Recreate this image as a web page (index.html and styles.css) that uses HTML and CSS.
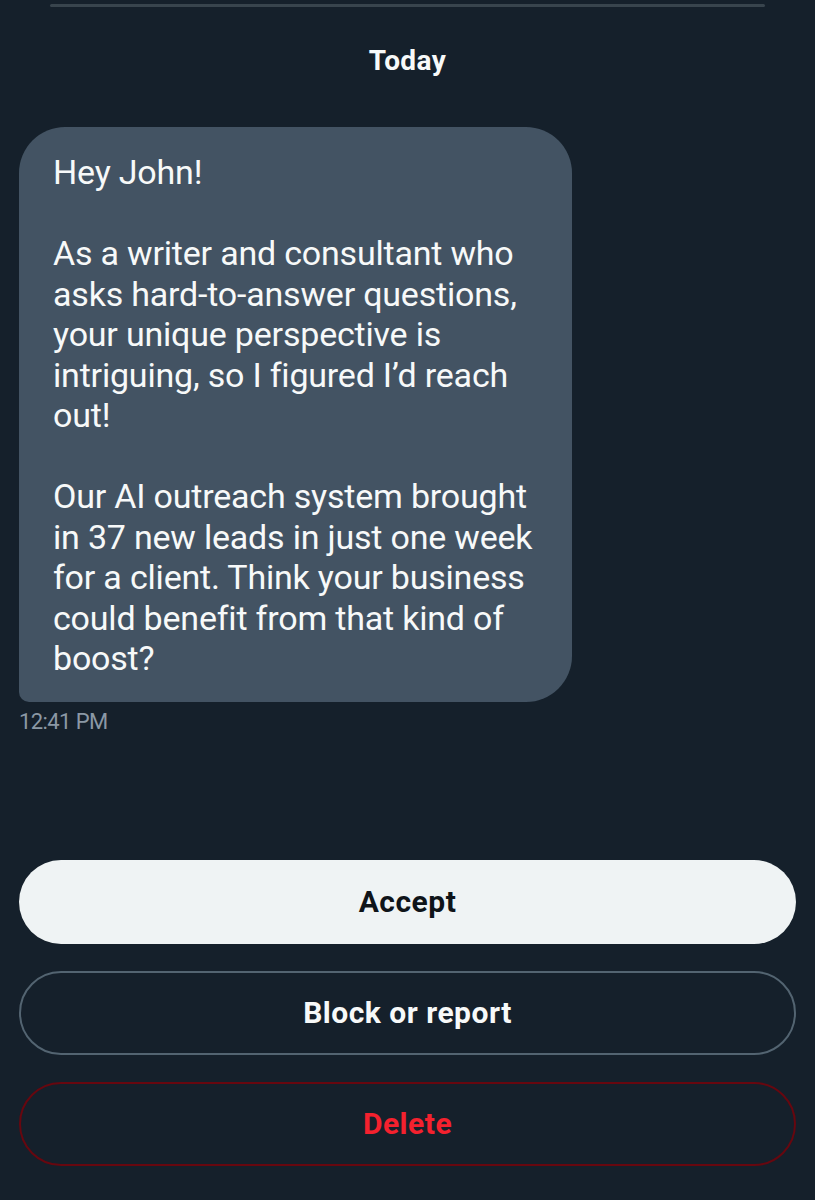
FILE: index.html
```html
<!DOCTYPE html>
<html lang="en">
<head>
    <meta charset="UTF-8">
    <meta name="viewport" content="width=device-width, initial-scale=1.0">
    <title>Message request</title>
    <link rel="stylesheet" href="styles.css">
</head>
<body>
    <div class="screen">
        <div class="divider"></div>

        <div class="day-label">Today</div>

        <div class="conversation">
            <div class="bubble">
                <p>Hey John!</p>
                <p>As a writer and consultant who asks hard-to-answer questions, your unique perspective is intriguing, so I figured I’d reach out!</p>
                <p>Our AI outreach system brought in 37 new leads in just one week for a client. Think your business could benefit from that kind of boost?</p>
            </div>
            <div class="timestamp">12:41 PM</div>
        </div>

        <div class="actions">
            <button class="action-btn accept">Accept</button>
            <button class="action-btn block">Block or report</button>
            <button class="action-btn delete">Delete</button>
        </div>
    </div>
</body>
</html>
```

FILE: styles.css
```css
* {
    margin: 0;
    padding: 0;
    box-sizing: border-box;
}

body {
    font-family: Roboto, 'Liberation Sans', sans-serif;
    background: #15202b;
    color: #f7f9f9;
    width: 815px;
    height: 1200px;
    overflow: hidden;
}

.screen {
    display: flex;
    flex-direction: column;
    padding: 0 19px;
}

.divider {
    height: 3px;
    margin: 4px 31px 0;
    background: #38444d;
    border-radius: 2px;
}

.day-label {
    text-align: center;
    font-size: 28px;
    font-weight: 700;
    letter-spacing: 0.4px;
    margin-top: 37px;
    line-height: 34px;
}

.conversation {
    margin-top: 49px;
}

.bubble {
    width: 553px;
    background: #435363;
    border-radius: 46px 46px 46px 10px;
    padding: 25px 29px 23px 34px;
    font-size: 34px;
    line-height: 40.5px;
    letter-spacing: -0.2px;
}

.bubble p {
    margin-bottom: 40.5px;
}

.bubble p:last-child {
    margin-bottom: 0;
}

.timestamp {
    margin-top: 7px;
    font-size: 22px;
    line-height: 26px;
    color: #8b98a5;
    letter-spacing: -0.6px;
}

.actions {
    display: flex;
    flex-direction: column;
    gap: 27px;
    margin-top: 125px;
}

.action-btn {
    height: 84px;
    border-radius: 42px;
    font-family: Roboto, 'Liberation Sans', sans-serif;
    font-size: 30px;
    font-weight: 700;
    letter-spacing: 0.5px;
    background: transparent;
    cursor: pointer;
}

.accept {
    background: #eff3f4;
    color: #0f1419;
    border: none;
}

.block {
    color: #f7f9f9;
    border: 2px solid #536471;
}

.delete {
    color: #f4212e;
    border: 2px solid #67070f;
}
```
